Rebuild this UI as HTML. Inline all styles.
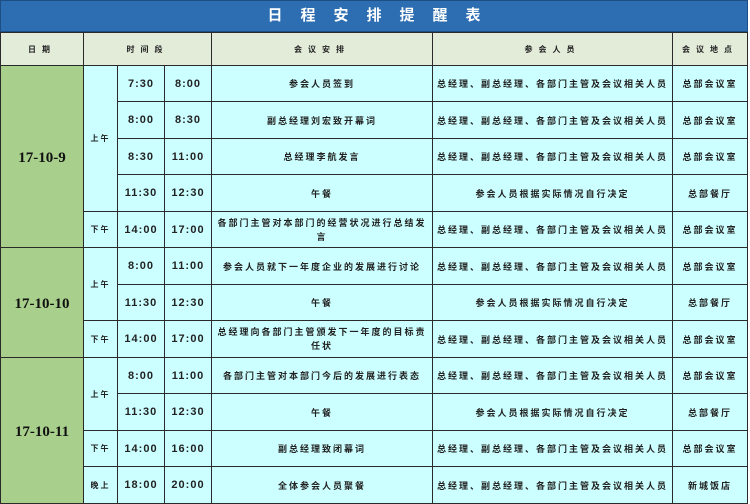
<!DOCTYPE html>
<html><head><meta charset="utf-8"><style>
body{margin:0;width:750px;height:501px;overflow:hidden;background:#fff;font-family:"Liberation Sans","Noto Sans CJK SC",sans-serif;}
.title{position:absolute;left:0;top:0;width:748px;height:32px;background:#2d6eb2;border:1px solid #1d4f85;box-sizing:border-box;color:#fff;font-size:15px;font-weight:bold;letter-spacing:18px;text-indent:18px;text-align:center;line-height:30px;}
table{position:absolute;left:0;top:32px;border-collapse:collapse;table-layout:fixed;}
td{border:1px solid #2a2a2a;padding:0;text-align:center;background:#ccffff;font-size:9px;font-weight:bold;color:#222;overflow:hidden;letter-spacing:2px;}
tr.h td{background:#e3ecd9;height:32px;letter-spacing:6px;font-size:8px;}
td.d{background:#a8cf8b;font-family:"Liberation Serif",serif;font-size:15px;color:#111;letter-spacing:0;padding-top:4px;}
td.t{font-family:"Liberation Sans",sans-serif;font-size:11px;letter-spacing:1px;}
td.p{font-size:8px;}
td.w{line-height:14px;padding:0 4px;}
</style></head><body>
<div class="title">日程安排提醒表</div>
<table>
<colgroup><col style="width:83px"><col style="width:34px"><col style="width:47px"><col style="width:47px"><col style="width:221px"><col style="width:240px"><col style="width:75px"></colgroup>
<tr class="h"><td>日期</td><td colspan="3">时间段</td><td>会议安排</td><td>参会人员</td><td>会议地点</td></tr>
<tr style="height:36px"><td class="d" rowspan="5">17-10-9</td><td class="p" rowspan="4">上午</td><td class="t">7:30</td><td class="t">8:00</td><td>参会人员签到</td><td>总经理、副总经理、各部门主管及会议相关人员</td><td>总部会议室</td></tr>
<tr style="height:37px"><td class="t">8:00</td><td class="t">8:30</td><td>副总经理刘宏致开幕词</td><td>总经理、副总经理、各部门主管及会议相关人员</td><td>总部会议室</td></tr>
<tr style="height:36px"><td class="t">8:30</td><td class="t">11:00</td><td>总经理李航发言</td><td>总经理、副总经理、各部门主管及会议相关人员</td><td>总部会议室</td></tr>
<tr style="height:37px"><td class="t">11:30</td><td class="t">12:30</td><td>午餐</td><td>参会人员根据实际情况自行决定</td><td>总部餐厅</td></tr>
<tr style="height:36px"><td class="p">下午</td><td class="t">14:00</td><td class="t">17:00</td><td class="w">各部门主管对本部门的经营状况进行总结发言</td><td>总经理、副总经理、各部门主管及会议相关人员</td><td>总部会议室</td></tr>
<tr style="height:37px"><td class="d" rowspan="3">17-10-10</td><td class="p" rowspan="2">上午</td><td class="t">8:00</td><td class="t">11:00</td><td>参会人员就下一年度企业的发展进行讨论</td><td>总经理、副总经理、各部门主管及会议相关人员</td><td>总部会议室</td></tr>
<tr style="height:36px"><td class="t">11:30</td><td class="t">12:30</td><td>午餐</td><td>参会人员根据实际情况自行决定</td><td>总部餐厅</td></tr>
<tr style="height:37px"><td class="p">下午</td><td class="t">14:00</td><td class="t">17:00</td><td class="w">总经理向各部门主管颁发下一年度的目标责任状</td><td>总经理、副总经理、各部门主管及会议相关人员</td><td>总部会议室</td></tr>
<tr style="height:36px"><td class="d" rowspan="4">17-10-11</td><td class="p" rowspan="2">上午</td><td class="t">8:00</td><td class="t">11:00</td><td>各部门主管对本部门今后的发展进行表态</td><td>总经理、副总经理、各部门主管及会议相关人员</td><td>总部会议室</td></tr>
<tr style="height:37px"><td class="t">11:30</td><td class="t">12:30</td><td>午餐</td><td>参会人员根据实际情况自行决定</td><td>总部餐厅</td></tr>
<tr style="height:36px"><td class="p">下午</td><td class="t">14:00</td><td class="t">16:00</td><td>副总经理致闭幕词</td><td>总经理、副总经理、各部门主管及会议相关人员</td><td>总部会议室</td></tr>
<tr style="height:37px"><td class="p">晚上</td><td class="t">18:00</td><td class="t">20:00</td><td>全体参会人员聚餐</td><td>总经理、副总经理、各部门主管及会议相关人员</td><td>新城饭店</td></tr>
</table>
</body></html>
